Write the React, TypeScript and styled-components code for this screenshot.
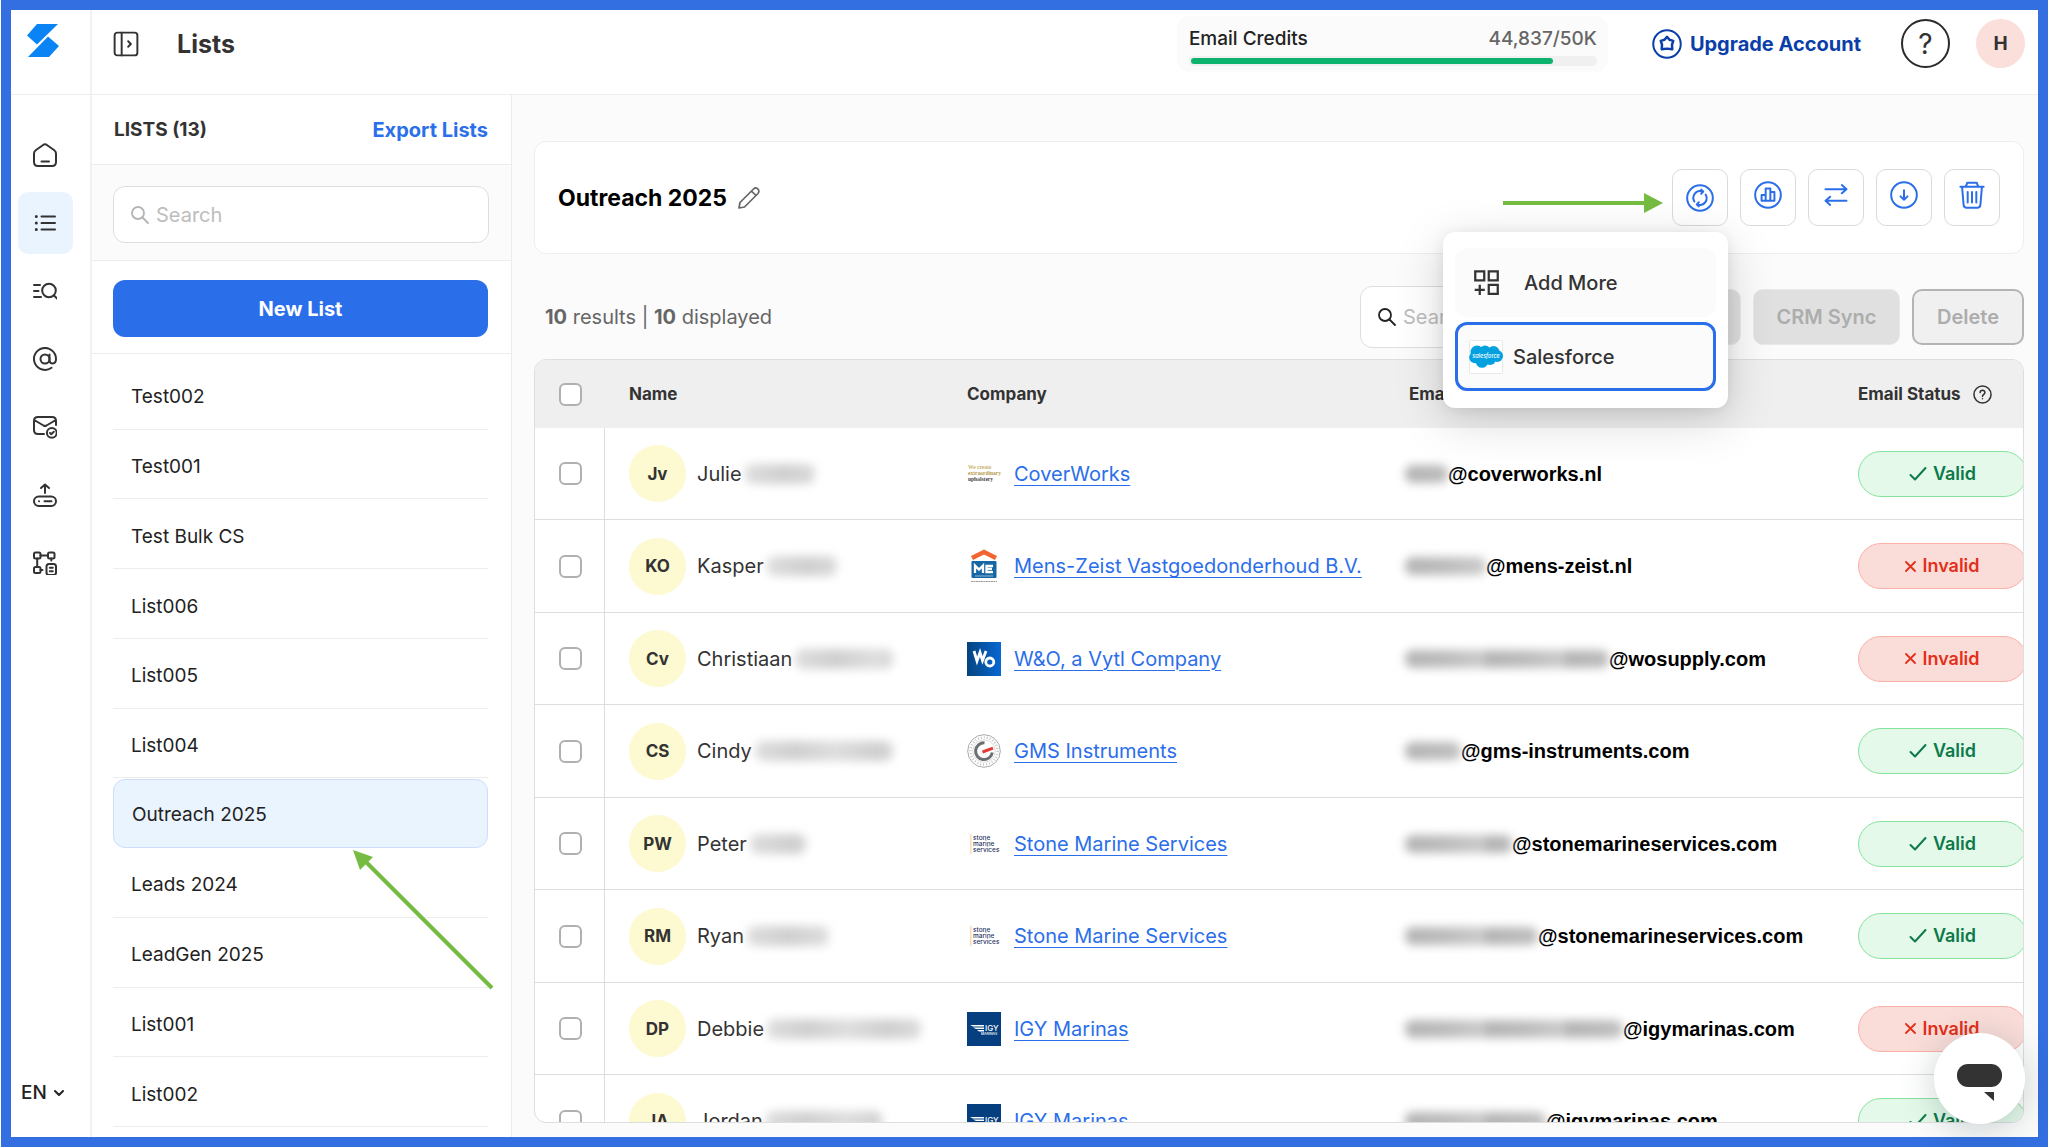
import React from "react";
import styled, { createGlobalStyle } from "styled-components";

const GlobalStyle = createGlobalStyle`
  *, *::before, *::after { box-sizing: border-box; }
  body { margin: 0; background: #fff; color: #222; font: 500 19px/24px Inter, "Noto Sans", sans-serif; }
  button, input, select { font: inherit; color: inherit; }
  button { cursor: pointer; }
  svg { display: block; flex: none; }
`;

const Frame = styled.div`
  display: flex;
  height: 100vh;
  margin-left: 1px;
  border: 10px solid #336fe0;
  overflow: hidden;
  background: #fff;
`;

/* ---------- navigation rail ---------- */
const Rail = styled.aside`
  display: flex;
  flex-direction: column;
  width: 81px;
  flex: none;
  border-right: 2px solid #f1f1f1;
`;
const LogoCell = styled.a`
  display: flex;
  height: 85px;
  padding: 14px 16px;
  border-bottom: 1px solid #ededed;
`;
const Nav = styled.nav`
  display: flex;
  flex-direction: column;
  gap: 6px;
  padding: 29px 7px;
  flex: 1;
`;
const NavItem = styled.a<{ $active?: boolean }>`
  display: grid;
  place-items: center;
  width: 55px;
  height: 62px;
  padding-right: 1px;
  border-radius: 10px;
  color: #333;
  background: ${(p) => (p.$active ? "#e9f4ff" : "transparent")};
`;
const Language = styled.label`
  display: flex;
  align-items: center;
  gap: 7px;
  height: 32px;
  margin: 0 0 28px 10px;
  select { appearance: none; border: 0; background: none; padding: 0; width: 26px; font-size: 19px; }
`;

/* ---------- header ---------- */
const Page = styled.div`
  display: flex;
  flex-direction: column;
  flex: 1;
  min-width: 0;
`;
const Header = styled.header`
  display: flex;
  align-items: center;
  height: 85px;
  flex: none;
  padding: 0 13px 17px 21px;
  border-bottom: 1px solid #ededed;
`;
const BareButton = styled.button`
  display: grid;
  place-items: center;
  padding: 0;
  border: 0;
  background: none;
  color: #333;
`;
const PageTitle = styled.h1`
  margin: 0 auto 0 38px;
  font-size: 25px;
  line-height: 32px;
  font-weight: 700;
  color: #333;
`;
const Credits = styled.section`
  width: 431px;
  height: 56px;
  margin-right: 44px;
  padding: 11px 11px 6px 12px;
  border-radius: 12px;
  background: #fbfbfb;
`;
const CreditsRow = styled.div`
  display: flex;
  justify-content: space-between;
  span:last-child { color: #666; }
`;
const Track = styled.div`
  display: flex;
  align-items: center;
  height: 10px;
  margin-top: 5px;
  padding: 0 2px;
  border-radius: 5px;
  background: #f0f0f0;
`;
const Fill = styled.div`
  height: 6px;
  border-radius: 3px;
  background: #0db36c;
`;
const Upgrade = styled.a`
  display: flex;
  align-items: center;
  gap: 8px;
  margin-right: 40px;
  color: #0a3ea8;
  font-size: 20px;
  font-weight: 700;
  text-decoration: none;
  white-space: nowrap;
`;
const RoundButton = styled.button<{ $filled?: boolean }>`
  display: grid;
  place-items: center;
  width: 49px;
  height: 49px;
  padding: 0;
  border-radius: 50%;
  border: ${(p) => (p.$filled ? "0" : "2px solid #2b2b2b")};
  background: ${(p) => (p.$filled ? "#fadfdb" : "#fff")};
  font-size: ${(p) => (p.$filled ? "19px" : "28px")};
  font-weight: ${(p) => (p.$filled ? 700 : 400)};
  color: #333;
  & + & { margin-left: 26px; }
`;

/* ---------- list panel ---------- */
const Body = styled.div`
  display: flex;
  flex: 1;
  min-height: 0;
`;
const Panel = styled.section`
  display: flex;
  flex-direction: column;
  width: 420px;
  flex: none;
  border-right: 1px solid #ececec;
`;
const PanelHead = styled.div`
  display: flex;
  justify-content: space-between;
  align-items: center;
  height: 70px;
  padding: 0 23px 0 22px;
  border-bottom: 1px solid #ededed;
  h2 { margin: 0; font-size: 19px; font-weight: 700; color: #333; }
  a { color: #2b6fea; font-size: 20px; font-weight: 700; text-decoration: none; }
`;
const PanelSearch = styled.div`
  padding: 21px 22px 17px 21px;
  background: #fbfbfb;
  border-bottom: 1px solid #ededed;
`;
const SearchField = styled.label<{ $dark?: boolean }>`
  display: flex;
  align-items: center;
  gap: 7px;
  width: ${(p) => (p.$dark ? "249px" : "100%")};
  height: ${(p) => (p.$dark ? "62px" : "57px")};
  padding: 0 17px;
  border: 1px solid #dedede;
  border-radius: 12px;
  background: #fff;
  color: ${(p) => (p.$dark ? "#222" : "#b5b5b5")};
  input {
    flex: 1;
    min-width: 0;
    border: 0;
    outline: 0;
    padding: 0;
    background: none;
    font-weight: 400;
    font-size: 20px;
  }
  input::placeholder { color: #bdbdbd; opacity: 1; }
`;
const PanelAction = styled.div`
  padding: 19px 23px 16px 21px;
  border-bottom: 1px solid #ededed;
`;
const PrimaryButton = styled.button`
  width: 100%;
  height: 57px;
  border: 0;
  border-radius: 12px;
  background: #2b6eea;
  color: #fff;
  font-size: 20px;
  font-weight: 700;
`;
const ListItems = styled.ul`
  display: grid;
  grid-auto-rows: 1fr;
  flex: 1;
  margin: 0;
  padding: 6px 23px 10px 21px;
  list-style: none;
`;
const ListItem = styled.li<{ $selected?: boolean }>`
  position: relative;
  display: flex;
  align-items: center;
  border: ${(p) => (p.$selected ? "1px solid #cfdefa" : "0 solid #ededed")};
  border-bottom-width: 1px;
  border-radius: ${(p) => (p.$selected ? "12px" : "0")};
  background: ${(p) => (p.$selected ? "#e9f4ff" : "transparent")};
  margin-top: ${(p) => (p.$selected ? "1px" : "0")};
  padding: ${(p) => (p.$selected ? "2px" : "6px")} 18px 0;
  a { color: #222; font-weight: 400; text-decoration: none; }
`;
const ListArrow = styled.svg`
  position: absolute;
  left: 239px;
  top: 69px;
  z-index: 2;
`;

/* ---------- main column ---------- */
const Main = styled.main`
  display: flex;
  flex-direction: column;
  flex: 1;
  min-width: 0;
  padding: 46px 14px 14px 22px;
  background: #fbfbfb;
`;
const TitleCard = styled.section`
  display: flex;
  align-items: center;
  gap: 10px;
  height: 113px;
  flex: none;
  padding: 0 23px;
  border: 1px solid #eee;
  border-radius: 12px;
  background: #fff;
  h2 { margin: 0; font-size: 23px; line-height: 32px; font-weight: 700; color: #000; }
`;
const Actions = styled.div`
  display: flex;
  gap: 12px;
  margin-left: auto;
`;
const ActionWrap = styled.div`
  position: relative;
`;
const ActionButton = styled.button<{ $centered?: boolean }>`
  display: grid;
  place-items: center;
  width: 56px;
  height: 57px;
  padding: ${(p) => (p.$centered ? "0" : "0 0 6px")};
  border: 1px solid #dadada;
  border-radius: 10px;
  background: #fff;
  color: #2b6eea;
`;
const ActionArrow = styled.svg`
  position: absolute;
  right: calc(100% + 9px);
  top: 24px;
`;
const Menu = styled.div`
  position: absolute;
  right: 0;
  top: 63px;
  z-index: 5;
  display: flex;
  flex-direction: column;
  gap: 5px;
  width: 285px;
  padding: 16px 12px 17px;
  border-radius: 12px;
  background: #fff;
  box-shadow: 0 12px 48px rgba(0, 0, 0, 0.17), 0 2px 14px rgba(0, 0, 0, 0.08);
`;
const MenuItem = styled.button<{ $active?: boolean }>`
  display: flex;
  align-items: center;
  gap: ${(p) => (p.$active ? "10px" : "24px")};
  height: 69px;
  padding: 0 ${(p) => (p.$active ? "11px" : "15px")};
  border: 3px solid ${(p) => (p.$active ? "#2b6eea" : "#fbfbfb")};
  border-radius: 12px;
  background: #fbfbfb;
  color: #333;
  font-size: 20px;
  text-align: left;
`;

const Toolbar = styled.div`
  display: flex;
  align-items: center;
  gap: 12px;
  flex: none;
  height: 62px;
  margin: 32px 0 11px;
`;
const Results = styled.p`
  margin: 0 auto 0 11px;
  color: #666;
  font-size: 20px;
  font-weight: 400;
  b { font-weight: 700; }
`;
const DisabledButton = styled.button<{ $outlined?: boolean; $width: number }>`
  width: ${(p) => p.$width}px;
  height: 56px;
  padding: 0;
  border: ${(p) => (p.$outlined ? "2px solid #b4b4b4" : "1px solid #e9e9e9")};
  border-radius: 10px;
  background: ${(p) => (p.$outlined ? "#f0f0f0" : "#e0e0e0")};
  color: #adadad;
  font-size: 20px;
  font-weight: 600;
`;

const TableWrap = styled.div`
  flex: 1;
  min-height: 0;
  overflow: hidden;
  border: 1px solid #dedede;
  border-radius: 12px;
  background: #fff;
`;
const Table = styled.table`
  width: calc(100% + 18px);
  table-layout: fixed;
  border-collapse: separate;
  border-spacing: 0;
  th, td { padding: 0 0 0 24px; text-align: left; vertical-align: middle; }
  thead th { height: 68px; background: #efefef; color: #333; font-size: 17px; font-weight: 700; }
  td { height: 92px; border-bottom: 1px solid #dedede; }
  tr:nth-child(even) td { height: 93px; }
  td:first-child { border-right: 1px solid #dedede; }
  col.check { width: 70px; }
  col.name { width: 338px; }
  col.email { width: 449px; }
  col.status { width: 207px; }
`;
const Check = styled.input`
  appearance: none;
  display: block;
  width: 23px;
  height: 23px;
  margin: 0;
  border: 2px solid #b0b0b0;
  border-radius: 6px;
  background: #fff;
`;
const Cell = styled.div<{ $gap?: number }>`
  display: flex;
  align-items: center;
  gap: ${(p) => p.$gap ?? 0}px;
  white-space: nowrap;
`;
const Avatar = styled.span`
  display: grid;
  place-items: center;
  width: 57px;
  height: 57px;
  border-radius: 50%;
  background: #fdf9d0;
  color: #333;
  font-size: 17px;
  font-weight: 700;
`;
const PersonName = styled.span`
  display: flex;
  align-items: center;
  gap: 3px;
  color: #333;
  font-size: 20px;
  font-weight: 400;
`;
const Redacted = styled.span<{ $width: number; $strong?: boolean }>`
  width: ${(p) => p.$width}px;
  height: ${(p) => (p.$strong ? "18px" : "20px")};
  border-radius: 8px;
  background: repeating-linear-gradient(
    90deg,
    ${(p) => (p.$strong ? "#b4b4b4" : "#dedede")} 0,
    ${(p) => (p.$strong ? "#bcbcbc" : "#cfcfcf")} 40px,
    ${(p) => (p.$strong ? "#cbcbcb" : "#dedede")} 80px
  );
  filter: blur(5px);
`;
const CompanyLink = styled.a`
  color: #2b6eea;
  font-size: 20px;
  font-weight: 400;
  text-decoration: underline;
  text-decoration-thickness: 1px;
  text-underline-offset: 4px;
`;
const EmailCell = styled(Cell)`
  margin-left: -4px;
`;
const Email = styled.span`
  color: #000;
  font: 700 20px/24px "Liberation Sans", Arial, sans-serif;
`;
const Pill = styled.span<{ $valid: boolean }>`
  display: flex;
  align-items: center;
  justify-content: center;
  gap: 6px;
  width: 169px;
  height: 46px;
  border: 1px solid ${(p) => (p.$valid ? "#86e39b" : "#fbb0a6")};
  border-radius: 23px;
  background: ${(p) => (p.$valid ? "#e4f9ea" : "#faddd9")};
  color: ${(p) => (p.$valid ? "#0d7a4a" : "#e3301a")};
  font-size: 18px;
  font-weight: 600;
`;
const ChatButton = styled.button`
  position: fixed;
  right: 23px;
  bottom: 23px;
  z-index: 10;
  display: grid;
  place-items: center;
  width: 91px;
  height: 91px;
  padding: 8px 0 0;
  border: 0;
  border-radius: 50%;
  background: #fff;
  box-shadow: 0 6px 36px rgba(20, 50, 50, 0.22);
`;

/* ---------- icons ---------- */
type IconProps = { size?: number; stroke?: number; view?: number; children: React.ReactNode };
const Icon = ({ size = 24, stroke = 2, view = 24, children }: IconProps) => (
  <svg width={size} height={size} viewBox={`0 0 ${view} ${view}`} fill="none" stroke="currentColor"
    strokeWidth={stroke} strokeLinecap="round" strokeLinejoin="round" aria-hidden="true">
    {children}
  </svg>
);

const SearchIcon = () => (
  <Icon size={18} stroke={1.8} view={18}><circle cx="7" cy="7" r="6" /><path d="M11.5 11.5 17 17" /></Icon>
);

const navItems = [
  { label: "Home", icon: <path d="M10.500 1.700 3 7Q1 8.500 1 10.500V19Q1 23 5 23H19Q23 23 23 19V10.500Q23 8.500 21 7L13.500 1.700Q12 .7 10.500 1.700ZM8.500 18.500H16" /> },
  { label: "Lists", active: true, icon: <><path d="M8.500 5.500H22M8.500 12H22M8.500 18.500H22" /><path d="M3.300 5.500h.01M3.300 12h.01M3.300 18.500h.01" strokeWidth="3" /></> },
  { label: "Search", icon: <><circle cx="16" cy="11.500" r="6.800" /><path d="m21 16.500 3 3M1 6H7M1 12H5.500M1 18H8" /></> },
  { label: "Email finder", icon: <><circle cx="12" cy="12" r="4.500" /><path d="M16.500 7.500V13.500Q16.800 16.500 19.700 16.500 23 16.300 23 12A11 11 0 1 0 18.500 20.800" /></> },
  { label: "Verify email", icon: <><path d="M11 19H5Q1 19 1 15V6Q1 2 5 2H19Q23 2 23 6V10M2 5.500 10.500 10.500Q12 11.300 13.500 10.500L22 5.500" /><circle cx="18.800" cy="17.800" r="4.900" /><path d="m16.900 17.900 1.300 1.300 2.600-2.500" /></> },
  { label: "Upload", icon: <><rect x="1" y="13.500" width="22" height="9.500" rx="4.700" /><path d="M12 10V1.500M8 5l4-3.500L16 5M11.500 18.200H18.500M6 18.200h.01" /></> },
  { label: "Integrations", icon: <><rect x="1" y="1.500" width="6.500" height="6" rx="1.500" /><rect x="15" y="1.500" width="6.500" height="6" rx="1.500" /><rect x="1" y="16" width="6.500" height="6" rx="1.500" /><path d="M7.500 4.500H15M4.200 7.500V16M18.300 7.500V9.500M7.500 19H9.500" /><rect x="13.500" y="13" width="9.500" height="11" rx="2.500" /><path d="M16.800 16.800h3M16.800 20.200h3" /></> },
];

/* ---------- company marks ---------- */
const logos: Record<string, React.ReactNode> = {
  cover: (
    <g fontFamily="Liberation Serif, serif" fontSize="5.500" fontWeight="700">
      <text x="1" y="12" fill="#c9b26a">We create</text>
      <text x="1" y="18" fill="#b59c4c">extraordinary</text>
      <text x="1" y="24" fill="#444">upholstery</text>
    </g>
  ),
  mens: (
    <>
      <path d="M5 9 17 3 29 9" fill="none" stroke="#f26430" strokeWidth="4.500" />
      <rect x="4.500" y="12" width="25" height="17" rx="1" fill="#1668a4" />
      <path d="M8 24V16.500L12 20.500 16 16.500V24M26 17H19.500V23.200H26M19.500 20H25" fill="none" stroke="#fff" strokeWidth="2.300" />
      <path d="M8 27H26" stroke="#8fb8d6" strokeWidth="1" />
      <path d="M4 32.500H30" stroke="#999" strokeWidth="1" strokeDasharray="2 .5" />
    </>
  ),
  wo: (
    <>
      <defs><linearGradient id="wo"><stop stopColor="#04447f" /><stop offset="1" stopColor="#0868d3" /></linearGradient></defs>
      <rect width="34" height="34" fill="url(#wo)" />
      <path d="M7 9 10 19 13 10.500 15.500 18.500 19 9" fill="none" stroke="#fff" strokeWidth="2.800" />
      <circle cx="22.800" cy="20" r="4" fill="none" stroke="#fff" strokeWidth="2.800" />
    </>
  ),
  gms: (
    <g fill="none">
      <circle cx="17" cy="17" r="16.300" stroke="#aaa" strokeWidth="1" />
      <circle cx="17" cy="17" r="13.500" stroke="#c4c4c4" strokeWidth="2.500" strokeDasharray="1 2" />
      <circle cx="17" cy="17" r="11.200" stroke="#d4d4d4" strokeWidth=".8" />
      <path d="M17.500 8.800A8.400 8.400 0 1 0 25.300 18.500" stroke="#6b6e72" strokeWidth="3" />
      <path d="m15.500 18 10.500-3.800" stroke="#e63b35" strokeWidth="3" />
    </g>
  ),
  stone: (
    <g fontFamily="Inter, sans-serif" fontSize="6.500" fontWeight="500" fill="#29335f">
      <path d="M3.800 7V27" stroke="#f8dcb8" strokeWidth="1.500" />
      <text x="6" y="13">stone</text>
      <text x="6" y="19">marine</text>
      <text x="6" y="25">services</text>
    </g>
  ),
  igy: (
    <>
      <rect width="34" height="34" fill="#053f7f" />
      <path d="M3 13H17V14.500H6ZM6 15.500H17V17H9ZM10 18H17V19.500H12Z" fill="#fff" />
      <g fill="#fff" fontFamily="Inter, sans-serif">
        <text x="18" y="19" fontSize="8" fontWeight="500">IGY</text>
        <text x="14" y="23" fontSize="3.500">MARINAS</text>
      </g>
    </>
  ),
};

const people = [
  { initials: "Jv", name: "Julie", hidden: 70, logo: "cover", company: "CoverWorks", mask: 43, domain: "@coverworks.nl", valid: true },
  { initials: "KO", name: "Kasper", hidden: 70, logo: "mens", company: "Mens-Zeist Vastgoedonderhoud B.V.", mask: 81, domain: "@mens-zeist.nl", valid: false },
  { initials: "Cv", name: "Christiaan", hidden: 98, logo: "wo", company: "W&O, a Vytl Company", mask: 204, domain: "@wosupply.com", valid: false },
  { initials: "CS", name: "Cindy", hidden: 138, logo: "gms", company: "GMS Instruments", mask: 56, domain: "@gms-instruments.com", valid: true },
  { initials: "PW", name: "Peter", hidden: 56, logo: "stone", company: "Stone Marine Services", mask: 107, domain: "@stonemarineservices.com", valid: true },
  { initials: "RM", name: "Ryan", hidden: 82, logo: "stone", company: "Stone Marine Services", mask: 133, domain: "@stonemarineservices.com", valid: true },
  { initials: "DP", name: "Debbie", hidden: 154, logo: "igy", company: "IGY Marinas", mask: 218, domain: "@igymarinas.com", valid: false },
  { initials: "JA", name: "Jordan", hidden: 116, logo: "igy", company: "IGY Marinas", mask: 141, domain: "@igymarinas.com", valid: true },
];

const lists = ["Test002", "Test001", "Test Bulk CS", "List006", "List005", "List004", "Outreach 2025", "Leads 2024", "LeadGen 2025", "List001", "List002"];

export default function App() {
  return (
    <>
      <GlobalStyle />
      <Frame>
        <Rail>
          <LogoCell href="#" aria-label="Dashboard">
            <svg width="32" height="33" viewBox="0 0 32 33" fill="#0a84f5" aria-hidden="true">
              <path d="M10 0H31L10 20.500 0 11.500Z" /><path d="M21 12.500 32 22 22 33H1Z" />
            </svg>
          </LogoCell>
          <Nav aria-label="Primary">
            {navItems.map((n) => (
              <NavItem key={n.label} href="#" aria-label={n.label} $active={n.active}><Icon>{n.icon}</Icon></NavItem>
            ))}
          </Nav>
          <Language>
            <select aria-label="Language"><option>EN</option></select>
            <Icon size={10} view={10}><path d="m1 3 4 4 4-4" /></Icon>
          </Language>
        </Rail>

        <Page>
          <Header>
            <BareButton aria-label="Toggle sidebar">
              <Icon size={26} stroke={1.8}><rect x="1.500" y="1.500" width="21" height="21" rx="2.500" /><path d="M8 1.500V22.500M14 9.500l2.500 2.500-2.500 2.500" /></Icon>
            </BareButton>
            <PageTitle>Lists</PageTitle>
            <Credits>
              <CreditsRow><span>Email Credits</span><span>44,837/50K</span></CreditsRow>
              <Track><Fill style={{ width: `${(44837 / 50000) * 100}%` }} /></Track>
            </Credits>
            <Upgrade href="#">
              <Icon size={30} stroke={1.6}><circle cx="12" cy="12" r="11" /><path d="m12 6.300 2 2.300 3 .9-1 3 .2 3.700-4.200-.5-4.200.5.200-3.700-1-3 3-.9Z" strokeWidth="2" /></Icon>
              Upgrade Account
            </Upgrade>
            <RoundButton aria-label="Help">?</RoundButton>
            <RoundButton $filled>H</RoundButton>
          </Header>

          <Body>
            <Panel>
              <PanelHead><h2>LISTS (13)</h2><a href="#">Export Lists</a></PanelHead>
              <PanelSearch>
                <SearchField><SearchIcon /><input aria-label="Search lists" placeholder="Search" /></SearchField>
              </PanelSearch>
              <PanelAction><PrimaryButton>New List</PrimaryButton></PanelAction>
              <ListItems>
                {lists.map((l) => {
                  const selected = l === "Outreach 2025";
                  return (
                    <ListItem key={l} $selected={selected}>
                      <a href="#">{l}</a>
                      {selected && (
                        <ListArrow width="144" height="142" viewBox="0 0 144 142" aria-hidden="true">
                          <path d="M12 12 139 139" stroke="#76bc43" strokeWidth="4" />
                          <path d="M0 1 20 8 7 21Z" fill="#76bc43" />
                        </ListArrow>
                      )}
                    </ListItem>
                  );
                })}
              </ListItems>
            </Panel>

            <Main>
              <TitleCard>
                <h2>Outreach 2025</h2>
                <BareButton aria-label="Rename list">
                  <Icon size={24} stroke={1.7}><path d="M2 22 3 16.500 16.500 3Q18.500 1 20.500 2.700 23 5 21 7.500L7.500 21ZM14.500 5.200 19 9.500" stroke="#666" /></Icon>
                </BareButton>
                <Actions>
                  <ActionWrap>
                    <ActionArrow width="160" height="20" viewBox="0 0 160 20" fill="#76bc43" aria-hidden="true">
                      <path d="M0 8H141V0L160 10 141 20V12H0Z" />
                    </ActionArrow>
                    <ActionButton $centered aria-label="Sync list">
                      <Icon size={28} stroke={1.7}><circle cx="12" cy="12" r="11" /><path d="M7.200 15A5.800 5.800 0 0 1 13.500 6.300M13 4.800 14.800 6.500 13 8.300M16.800 9A5.800 5.800 0 0 1 10.500 17.700M11 19.200 9.200 17.500 11 15.700" /></Icon>
                    </ActionButton>
                    <Menu role="menu">
                      <MenuItem role="menuitem">
                        <Icon size={27}><path d="M2 2h8v8H2ZM14 2h8v8h-8ZM14 14h8v8h-8ZM6 14V23M1.500 18.500H10.500" strokeLinejoin="miter" strokeLinecap="butt" /></Icon>
                        Add More
                      </MenuItem>
                      <MenuItem role="menuitem" $active>
                        <svg width="34" height="34" viewBox="0 0 34 34" aria-hidden="true">
                          <rect x=".5" y=".5" width="33" height="33" rx="1" fill="#fff" stroke="#e9e9e9" />
                          <g fill="#04a1e0">
                            <circle cx="8" cy="12" r="6.500" /><circle cx="16" cy="11" r="5.500" /><circle cx="24.500" cy="12" r="6" />
                            <circle cx="28" cy="16" r="6" /><circle cx="6" cy="17.500" r="5.800" /><circle cx="13" cy="21.500" r="6.300" /><circle cx="21" cy="19" r="6" />
                          </g>
                          <text x="17" y="18" fill="#fff" fontSize="5.500" fontStyle="italic" textAnchor="middle" fontFamily="Inter, sans-serif">salesforce</text>
                        </svg>
                        Salesforce
                      </MenuItem>
                    </Menu>
                  </ActionWrap>
                  <ActionButton aria-label="Statistics">
                    <Icon size={28} stroke={1.7}><circle cx="12" cy="12" r="11" /><path d="M6.500 17V12H10V17ZM10 17V6.500H14V17ZM14 17V9.500H17.500V17Z" /></Icon>
                  </ActionButton>
                  <ActionButton aria-label="Move contacts">
                    <Icon size={28} stroke={1.7}><path d="M3 7H21M17 3.500 21 7 17 10.500M21 17H3M7 13.500 3 17 7 20.500" /></Icon>
                  </ActionButton>
                  <ActionButton aria-label="Download">
                    <Icon size={28} stroke={1.7}><circle cx="12" cy="12" r="11" /><path d="M12 8V16M9 13.200 12 16 15 13.200" /></Icon>
                  </ActionButton>
                  <ActionButton aria-label="Delete list">
                    <Icon size={28} stroke={1.7}><path d="M2 5H22M6.500 5 8 1.500H16L17.500 5M3.500 5 4.800 20.500Q5 23 7.500 23H16.500Q19 23 19.200 20.500L20.500 5M8.300 9.500V18.500M12 9.500V18.500M15.700 9.500V18.500" /></Icon>
                  </ActionButton>
                </Actions>
              </TitleCard>

              <Toolbar>
                <Results><b>10</b> results | <b>10</b> displayed</Results>
                <SearchField $dark><SearchIcon /><input aria-label="Search contacts" placeholder="Search" /></SearchField>
                <DisabledButton $width={120} disabled aria-label="Export contacts" />
                <DisabledButton $width={147} disabled>CRM Sync</DisabledButton>
                <DisabledButton $width={112} $outlined disabled>Delete</DisabledButton>
              </Toolbar>

              <TableWrap>
                <Table>
                  <colgroup><col className="check" /><col className="name" /><col /><col className="email" /><col className="status" /></colgroup>
                  <thead>
                    <tr>
                      <th><Check type="checkbox" aria-label="Select all" /></th>
                      <th>Name</th>
                      <th>Company</th>
                      <th>Email</th>
                      <th>
                        <Cell $gap={12}>
                          Email Status
                          <Icon size={19} view={20} stroke={1.6}><circle cx="10" cy="10" r="9" /><path d="M7.500 8Q7.600 5.500 10 5.500T12.500 8Q12.500 9.200 11.200 10T10 12M10 14.500v.01" /></Icon>
                        </Cell>
                      </th>
                    </tr>
                  </thead>
                  <tbody>
                    {people.map((p) => (
                      <tr key={p.initials}>
                        <td><Check type="checkbox" aria-label={`Select ${p.name}`} /></td>
                        <td>
                          <Cell $gap={11}>
                            <Avatar>{p.initials}</Avatar>
                            <PersonName>{p.name}<Redacted $width={p.hidden} /></PersonName>
                          </Cell>
                        </td>
                        <td>
                          <Cell $gap={13}>
                            <svg width="34" height="34" viewBox="0 0 34 34" aria-hidden="true">{logos[p.logo]}</svg>
                            <CompanyLink href="#">{p.company}</CompanyLink>
                          </Cell>
                        </td>
                        <td><EmailCell><Redacted $strong $width={p.mask} /><Email>{p.domain}</Email></EmailCell></td>
                        <td>
                          <Pill $valid={p.valid}>
                            {p.valid
                              ? <Icon size={18} view={18}><path d="m1.500 10 4.500 4.500L16.500 3" /></Icon>
                              : <Icon size={11} view={11} stroke={1.8}><path d="m1 1 9 9M10 1 1 10" /></Icon>}
                            {p.valid ? "Valid" : "Invalid"}
                          </Pill>
                        </td>
                      </tr>
                    ))}
                  </tbody>
                </Table>
              </TableWrap>
            </Main>
          </Body>
        </Page>
      </Frame>
      <ChatButton aria-label="Open chat">
        <svg width="46" height="37" viewBox="0 0 46 37" fill="#333" aria-hidden="true">
          <rect x="0" y="0" width="45" height="23" rx="11" /><path d="M27 28H37V37Z" />
        </svg>
      </ChatButton>
    </>
  );
}
